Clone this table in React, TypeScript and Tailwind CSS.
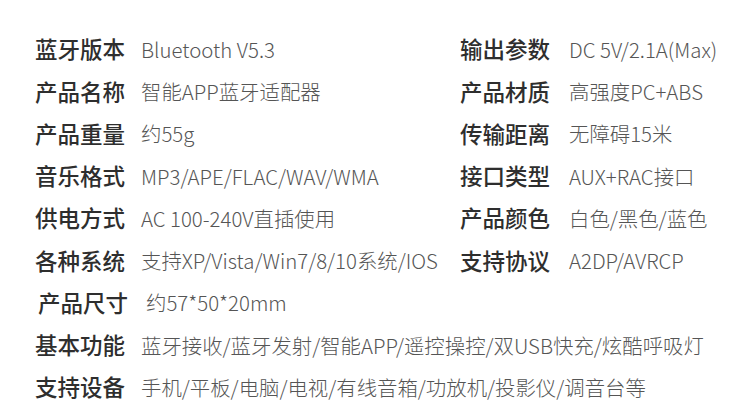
import React from "react";

const rows: { l: string; v: string; rl?: string; rv?: string }[] = [
  { l: "蓝牙版本", v: "Bluetooth V5.3", rl: "输出参数", rv: "DC 5V/2.1A(Max)" },
  { l: "产品名称", v: "智能APP蓝牙适配器", rl: "产品材质", rv: "高强度PC+ABS" },
  { l: "产品重量", v: "约55g", rl: "传输距离", rv: "无障碍15米" },
  { l: "音乐格式", v: "MP3/APE/FLAC/WAV/WMA", rl: "接口类型", rv: "AUX+RAC接口" },
  { l: "供电方式", v: "AC 100-240V直插使用", rl: "产品颜色", rv: "白色/黑色/蓝色" },
  { l: "各种系统", v: "支持XP/Vista/Win7/8/10系统/IOS", rl: "支持协议", rv: "A2DP/AVRCP" },
  { l: "产品尺寸", v: "约57*50*20mm" },
  { l: "基本功能", v: "蓝牙接收/蓝牙发射/智能APP/遥控操控/双USB快充/炫酷呼吸灯" },
  { l: "支持设备", v: "手机/平板/电脑/电视/有线音箱/功放机/投影仪/调音台等" },
];

const font = { fontFamily: '"Noto Sans CJK SC", "Noto Sans", sans-serif' };

export default function App() {
  return (
    <div className="w-[750px] h-[419px] bg-white overflow-hidden pt-[28px] pl-[35px]" style={font}>
      {rows.map((r, i) => (
        <div key={i} className="flex items-center h-[42.25px] whitespace-nowrap">
          <div className={`flex items-center ${r.rl ? "w-[425px]" : ""} ${i === 6 ? "pl-[3px]" : ""}`}>
            <span className="w-[106px] shrink-0 text-[22.5px] font-medium text-[#2e2e2e]">{r.l}</span>
            <span className={`text-[20.4px] font-light text-[#555555] ${i === 6 ? "pl-[2px]" : ""}`}>{r.v}</span>
          </div>
          {r.rl && (
            <div className="flex items-center">
              <span className="w-[109px] shrink-0 text-[22.5px] font-medium text-[#2e2e2e]">{r.rl}</span>
              <span className="text-[20.4px] font-light text-[#555555]">{r.rv}</span>
            </div>
          )}
        </div>
      ))}
    </div>
  );
}
